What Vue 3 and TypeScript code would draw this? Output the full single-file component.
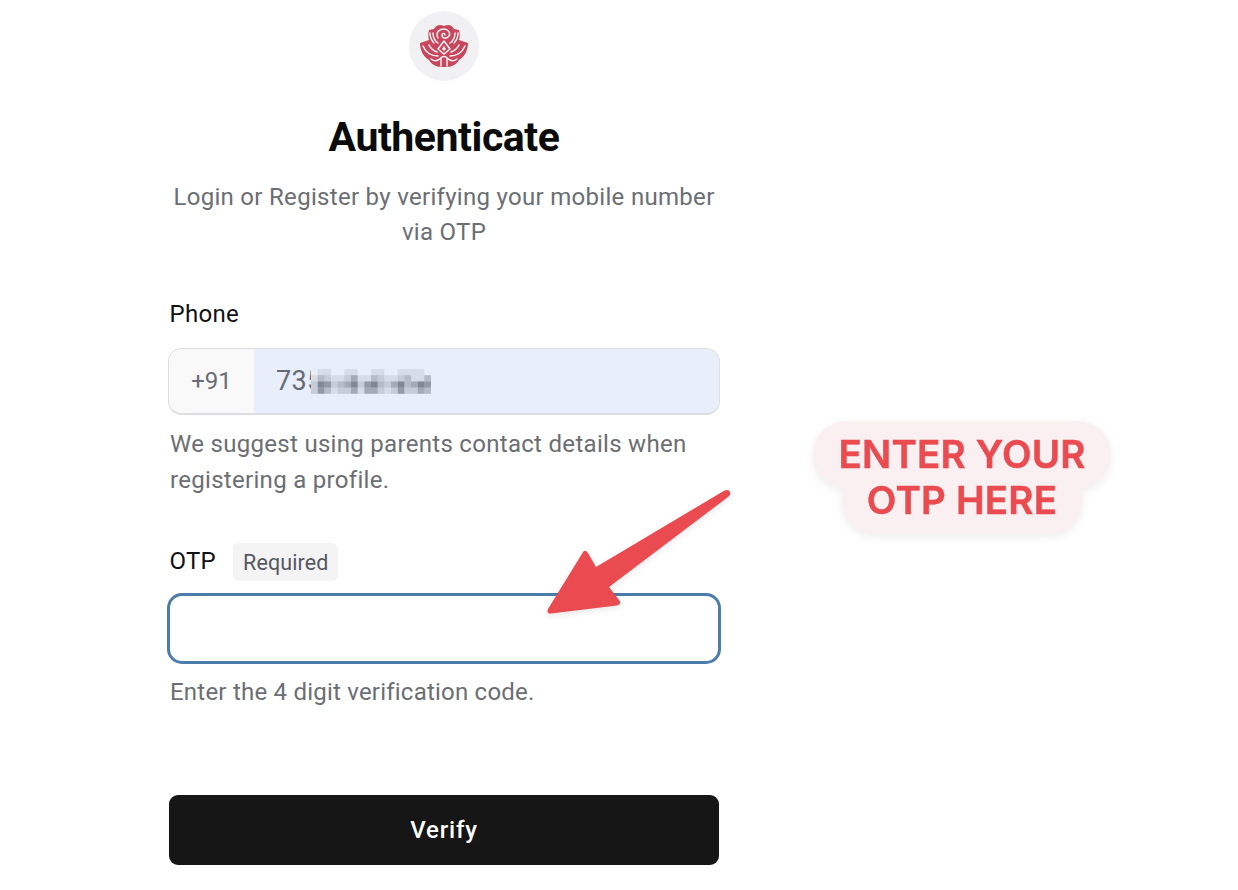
<script setup lang="ts">
// pixelated rows of the masked phone number, one darkness digit per cell
const maskRows = [
  '011001100110011110',
  '132112411321123113',
  '265234625632463465',
  '253122414421252243',
]

const maskCells = maskRows.flatMap((row, y) =>
  row.split('').map((level, x) => ({ x: x * 6.67, y: y * 6.2, opacity: Number(level) * 0.1 })),
)
</script>

<template>
  <div class="page">
    <main class="form">
      <div class="logo">
        <svg width="50" height="50" viewBox="0 0 50 50" fill="none" stroke="#f1f1f3" stroke-width="1.5" stroke-linecap="round" stroke-linejoin="round">
          <path
            d="M25 5 C21 3 17 4 15 8 L10 9 C9 13 9 16 10 19 L1 22 C1 30 5 36 10 39 C12 43 17 46 22 46 L28 46 C33 46 38 43 40 39 C45 36 49 30 49 22 L40 19 C41 16 41 13 40 9 L35 8 C33 4 29 3 25 5 Z"
            fill="#c8475c"
            stroke="none"
          />
          <path d="M19 17 C16 11 21 8 25 8 C29 8 32 12 30 15 C28 18 23 18 23 14 C23 12 26 12 26 14" />
          <path d="M14 12 C14 16 16 20 19 22 M36 12 C36 16 34 20 31 22" />
          <path d="M11 12 C11 16 12 19 15 22 M39 12 C39 16 38 19 35 22" />
          <path d="M25 20 L31 28 L25 33 L19 28 Z" />
          <path d="M25 25 L27 28 L25 30 L23 28 Z" fill="#f1f1f3" stroke="none" />
          <path d="M4 25 C7 32 12 35 19 35 M46 25 C43 32 38 35 31 35" />
          <path d="M10 24 C12 28 15 30 18 31 M40 24 C38 28 35 30 32 31" />
          <path d="M12 38 C16 41 19 40 22 37 L22 45 M38 38 C34 41 31 40 28 37 L28 45" />
          <path d="M22 37 C23 35 27 35 28 37" />
        </svg>
      </div>

      <h1 class="title">Authenticate</h1>
      <p class="subtitle">Login or Register by verifying your mobile number via OTP</p>

      <label class="label phone-label">Phone</label>
      <div class="phone-group">
        <span class="prefix">+91</span>
        <div class="phone-value">
          <span class="digits">735</span>
          <svg class="mask" width="120" height="25" viewBox="0 0 120 25">
            <rect width="120" height="25" fill="#e8eefa" />
            <rect
              v-for="(cell, i) in maskCells"
              :key="i"
              :x="cell.x"
              :y="cell.y"
              width="6.67"
              height="6.2"
              fill="#3f4552"
              :fill-opacity="cell.opacity"
            />
          </svg>
        </div>
      </div>
      <p class="hint">We suggest using parents contact details when registering a profile.</p>

      <div class="otp-label-row">
        <label class="label">OTP</label>
        <span class="badge">Required</span>
      </div>
      <div class="otp-input"></div>
      <p class="hint otp-hint">Enter the 4 digit verification code.</p>

      <button class="verify" type="button">Verify</button>
    </main>

    <!-- annotation on top of the screenshot -->
    <svg class="arrow" width="205" height="140" viewBox="0 0 205 140">
      <path
        d="M199.5 11 C197.5 9 195 10 192 12 L66 87 L58 73 C56 70 54 70 52.5 73 L18 129 C16.5 132 18 134 21 133.500 L87 125.500 C90.500 125 91 122 89 120 L79 107 L198 17 C200.500 15 201 13 199.500 11 Z"
        fill="#e94b50"
      />
    </svg>

    <div class="callout">
      <span class="callout-line">ENTER YOUR</span>
      <span class="callout-line">OTP HERE</span>
    </div>
  </div>
</template>

<style>
html,
body {
  margin: 0;
  background: #fff;
}
</style>

<style scoped>
.page {
  position: relative;
  width: 1238px;
  height: 890px;
  overflow: hidden;
  background: #fff;
  font-family: Roboto, "Liberation Sans", sans-serif;
}

.form {
  display: flex;
  flex-direction: column;
  box-sizing: border-box;
  width: 552px;
  margin-left: 168px;
  padding-top: 11px;
}

.logo {
  display: flex;
  align-items: center;
  justify-content: center;
  align-self: center;
  width: 70px;
  height: 70px;
  border-radius: 50%;
  background: #f1f1f3;
}

.title {
  margin: 30px 0 0;
  font-family: Roboto, sans-serif;
  font-size: 41px;
  line-height: 52px;
  font-weight: 700;
  letter-spacing: -0.45px;
  text-align: center;
  color: #0b0b0c;
}

.subtitle {
  width: 560px;
  margin: 17px 0 0 -4px;
  padding: 0 6px;
  box-sizing: border-box;
  font-size: 24px;
  line-height: 35px;
  letter-spacing: 0.3px;
  color: #6b6e73;
  text-align: center;
}

.label {
  font-size: 24px;
  line-height: 32px;
  letter-spacing: 0.3px;
  color: #101114;
}

.phone-label {
  margin: 48px 0 0 1.5px;
}

.phone-group {
  display: flex;
  box-sizing: border-box;
  height: 67px;
  margin-top: 18px;
  overflow: hidden;
  border: 1px solid #dcdde0;
  border-bottom-width: 2px;
  border-radius: 14px;
}

.prefix {
  display: flex;
  align-items: center;
  justify-content: center;
  width: 85px;
  background: #f9f9fa;
  font-size: 24px;
  color: #686c74;
}

.phone-value {
  display: flex;
  flex: 1;
  align-items: center;
  padding-left: 22px;
  background: #e8eefa;
  font-size: 27px;
  color: #686c74;
}

.digits {
  letter-spacing: 0.3px;
}

.mask {
  margin-left: -11px;
}

.hint {
  margin: 11px 0 0 2px;
  font-size: 24px;
  line-height: 36px;
  letter-spacing: 0.3px;
  color: #6b6e73;
}

.otp-label-row {
  display: flex;
  align-items: center;
  gap: 17px;
  margin: 45px 0 0 1.5px;
}

.otp-label-row .label {
  position: relative;
  top: -1px;
}

.badge {
  display: flex;
  align-items: center;
  height: 38px;
  padding: 0 10px;
  border-radius: 6px;
  background: #f4f4f5;
  font-size: 21.5px;
  letter-spacing: 0.1px;
  color: #55585e;
}

.otp-input {
  box-sizing: border-box;
  width: 554px;
  height: 71px;
  margin: 12px 0 0 -1px;
  border: 3px solid #4a7dab;
  border-radius: 15px;
  background: #fff;
}

.otp-hint {
  margin-top: 10px;
  letter-spacing: 0.22px;
}

.verify {
  width: 550px;
  height: 70px;
  margin: 85px 0 0 1px;
  padding: 0;
  border: 0;
  border-radius: 9px;
  background: #161616;
  color: #fff;
  font-family: Roboto, sans-serif;
  font-size: 24px;
  font-weight: 500;
  letter-spacing: 0.8px;
}

.arrow {
  position: absolute;
  left: 530px;
  top: 480px;
  filter: drop-shadow(0 2px 3px rgba(0, 0, 0, 0.1));
}

.callout {
  position: absolute;
  left: 813px;
  top: 431px;
  display: flex;
  flex-direction: column;
  align-items: center;
  width: 298px;
  filter: drop-shadow(0 3px 4px rgba(0, 0, 0, 0.07));
  font-family: Inter, sans-serif;
  font-size: 38.5px;
  font-weight: 600;
  line-height: 46px;
  letter-spacing: 0.2px;
  -webkit-text-stroke: 0.5px #e94b50;
  color: #e94b50;
}

.callout-line {
  position: relative;
  white-space: nowrap;
}

/* pills sit behind both text lines */
.callout-line::before {
  content: '';
  position: absolute;
  inset: -10px -25px -11px;
  z-index: -1;
  border-radius: 34px;
  background: #faf0f2;
}
</style>
